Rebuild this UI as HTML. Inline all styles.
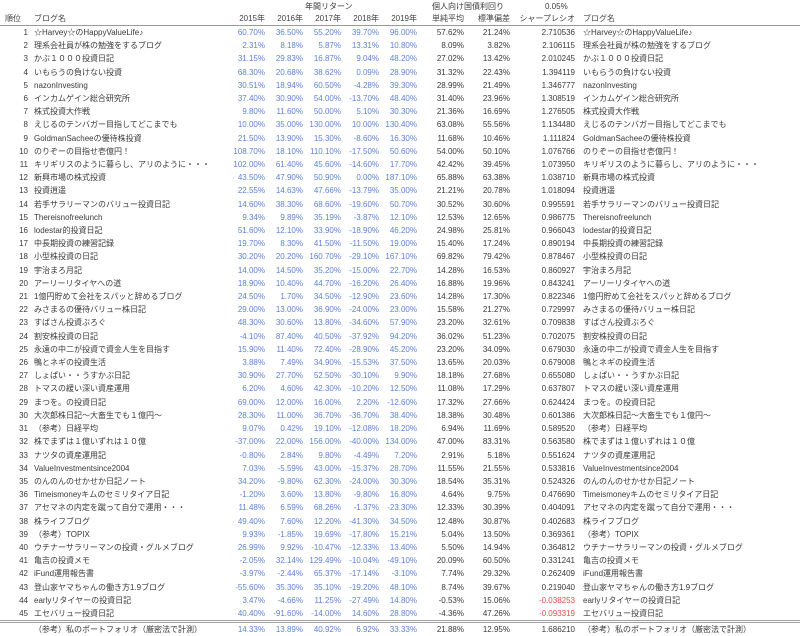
<!DOCTYPE html>
<html><head><meta charset="utf-8"><style>
html,body{margin:0;padding:0;background:#fff;width:800px;height:635px;overflow:hidden}
body{font-family:"Liberation Sans","Noto Sans CJK JP",sans-serif;font-size:8px;color:#3a3a3a}
.top{position:absolute;top:1px;height:12px;line-height:12px;white-space:nowrap}
table{position:absolute;left:0;top:13px;border-collapse:collapse;table-layout:fixed;width:800px}
td{padding:0;height:13.2px;line-height:13.2px;white-space:nowrap;overflow:visible;text-align:right}
td:nth-child(2),td:nth-child(11){text-align:left}
td:nth-child(2){padding-left:6px}
td:nth-child(11){padding-left:8px}
td:nth-child(n+3):nth-child(-n+7){color:#5f82d6}
tr.h td{height:12px;line-height:12px;border-bottom:1px solid #9a9a9a;color:#444}
tr.h td:first-child{text-align:left;padding-left:5px}
tr.h td:nth-child(n+3):nth-child(-n+7){color:#444}
tr.f td{border-top:3px double #a0a0a0}
.r{color:#f04848}
</style></head><body>
<div class="top" style="left:305px">年間リターン</div>
<div class="top" style="left:432px">個人向け国債利回り</div>
<div class="top" style="left:545px">0.05%</div>
<table>
<colgroup><col style="width:28px"><col style="width:200px"><col style="width:37px"><col style="width:38px"><col style="width:38px"><col style="width:38px"><col style="width:38px"><col style="width:47px"><col style="width:46px"><col style="width:65px"><col style="width:225px"></colgroup>
<tr class="h"><td>順位<td>ブログ名<td>2015年<td>2016年<td>2017年<td>2018年<td>2019年<td>単純平均<td>標準偏差<td>シャープレシオ<td>ブログ名
<tr><td>1<td>☆Harvey☆のHappyValueLife♪<td>60.70%<td>36.50%<td>55.20%<td>39.70%<td>96.00%<td>57.62%<td>21.24%<td>2.710536<td>☆Harvey☆のHappyValueLife♪
<tr><td>2<td>理系会社員が株の勉強をするブログ<td>2.31%<td>8.18%<td>5.87%<td>13.31%<td>10.80%<td>8.09%<td>3.82%<td>2.106115<td>理系会社員が株の勉強をするブログ
<tr><td>3<td>かぶ１０００投資日記<td>31.15%<td>29.83%<td>16.87%<td>9.04%<td>48.20%<td>27.02%<td>13.42%<td>2.010245<td>かぶ１０００投資日記
<tr><td>4<td>いもらうの負けない投資<td>68.30%<td>20.68%<td>38.62%<td>0.09%<td>28.90%<td>31.32%<td>22.43%<td>1.394119<td>いもらうの負けない投資
<tr><td>5<td>nazonInvesting<td>30.51%<td>18.94%<td>60.50%<td>-4.28%<td>39.30%<td>28.99%<td>21.49%<td>1.346777<td>nazonInvesting
<tr><td>6<td>インカムゲイン総合研究所<td>37.40%<td>30.90%<td>54.00%<td>-13.70%<td>48.40%<td>31.40%<td>23.96%<td>1.308519<td>インカムゲイン総合研究所
<tr><td>7<td>株式投資大作戦<td>9.80%<td>11.60%<td>50.00%<td>5.10%<td>30.30%<td>21.36%<td>16.69%<td>1.276505<td>株式投資大作戦
<tr><td>8<td>えじるのテンバガー目指してどこまでも<td>10.00%<td>35.00%<td>130.00%<td>10.00%<td>130.40%<td>63.08%<td>55.56%<td>1.134480<td>えじるのテンバガー目指してどこまでも
<tr><td>9<td>GoldmanSacheeの優待株投資<td>21.50%<td>13.90%<td>15.30%<td>-8.60%<td>16.30%<td>11.68%<td>10.46%<td>1.111824<td>GoldmanSacheeの優待株投資
<tr><td>10<td>のりぞーの目指せ壱億円！<td>108.70%<td>18.10%<td>110.10%<td>-17.50%<td>50.60%<td>54.00%<td>50.10%<td>1.076766<td>のりぞーの目指せ壱億円！
<tr><td>11<td>キリギリスのように暮らし、アリのように・・・<td>102.00%<td>61.40%<td>45.60%<td>-14.60%<td>17.70%<td>42.42%<td>39.45%<td>1.073950<td>キリギリスのように暮らし、アリのように・・・
<tr><td>12<td>新興市場の株式投資<td>43.50%<td>47.90%<td>50.90%<td>0.00%<td>187.10%<td>65.88%<td>63.38%<td>1.038710<td>新興市場の株式投資
<tr><td>13<td>投資逍遥<td>22.55%<td>14.63%<td>47.66%<td>-13.79%<td>35.00%<td>21.21%<td>20.78%<td>1.018094<td>投資逍遥
<tr><td>14<td>若手サラリーマンのバリュー投資日記<td>14.60%<td>38.30%<td>68.60%<td>-19.60%<td>50.70%<td>30.52%<td>30.60%<td>0.995591<td>若手サラリーマンのバリュー投資日記
<tr><td>15<td>Thereisnofreelunch<td>9.34%<td>9.89%<td>35.19%<td>-3.87%<td>12.10%<td>12.53%<td>12.65%<td>0.986775<td>Thereisnofreelunch
<tr><td>16<td>lodestar的投資日記<td>51.60%<td>12.10%<td>33.90%<td>-18.90%<td>46.20%<td>24.98%<td>25.81%<td>0.966043<td>lodestar的投資日記
<tr><td>17<td>中長期投資の練習記録<td>19.70%<td>8.30%<td>41.50%<td>-11.50%<td>19.00%<td>15.40%<td>17.24%<td>0.890194<td>中長期投資の練習記録
<tr><td>18<td>小型株投資の日記<td>30.20%<td>20.20%<td>160.70%<td>-29.10%<td>167.10%<td>69.82%<td>79.42%<td>0.878467<td>小型株投資の日記
<tr><td>19<td>宇治まろ月記<td>14.00%<td>14.50%<td>35.20%<td>-15.00%<td>22.70%<td>14.28%<td>16.53%<td>0.860927<td>宇治まろ月記
<tr><td>20<td>アーリーリタイヤへの道<td>18.90%<td>10.40%<td>44.70%<td>-16.20%<td>26.40%<td>16.88%<td>19.96%<td>0.843241<td>アーリーリタイヤへの道
<tr><td>21<td>1億円貯めて会社をスパッと辞めるブログ<td>24.50%<td>1.70%<td>34.50%<td>-12.90%<td>23.60%<td>14.28%<td>17.30%<td>0.822346<td>1億円貯めて会社をスパッと辞めるブログ
<tr><td>22<td>みさまるの優待バリュー株日記<td>29.00%<td>13.00%<td>36.90%<td>-24.00%<td>23.00%<td>15.58%<td>21.27%<td>0.729997<td>みさまるの優待バリュー株日記
<tr><td>23<td>すばさん投資ぶろぐ<td>48.30%<td>30.60%<td>13.80%<td>-34.60%<td>57.90%<td>23.20%<td>32.61%<td>0.709838<td>すばさん投資ぶろぐ
<tr><td>24<td>割安株投資の日記<td>-4.10%<td>87.40%<td>40.50%<td>-37.92%<td>94.20%<td>36.02%<td>51.23%<td>0.702075<td>割安株投資の日記
<tr><td>25<td>永遠の中二が投資で資金人生を目指す<td>15.90%<td>11.40%<td>72.40%<td>-28.90%<td>45.20%<td>23.20%<td>34.09%<td>0.679030<td>永遠の中二が投資で資金人生を目指す
<tr><td>26<td>鴨とネギの投資生活<td>3.88%<td>7.49%<td>34.90%<td>-15.53%<td>37.50%<td>13.65%<td>20.03%<td>0.679008<td>鴨とネギの投資生活
<tr><td>27<td>しょぱい・・うすかぶ日記<td>30.90%<td>27.70%<td>52.50%<td>-30.10%<td>9.90%<td>18.18%<td>27.68%<td>0.655080<td>しょぱい・・うすかぶ日記
<tr><td>28<td>トマスの緩い深い資産運用<td>6.20%<td>4.60%<td>42.30%<td>-10.20%<td>12.50%<td>11.08%<td>17.29%<td>0.637807<td>トマスの緩い深い資産運用
<tr><td>29<td>まつを。の投資日記<td>69.00%<td>12.00%<td>16.00%<td>2.20%<td>-12.60%<td>17.32%<td>27.66%<td>0.624424<td>まつを。の投資日記
<tr><td>30<td>大次郎株日記〜大畜生でも１億円〜<td>28.30%<td>11.00%<td>36.70%<td>-36.70%<td>38.40%<td>18.38%<td>30.48%<td>0.601386<td>大次郎株日記〜大畜生でも１億円〜
<tr><td>31<td>（参考）日経平均<td>9.07%<td>0.42%<td>19.10%<td>-12.08%<td>18.20%<td>6.94%<td>11.69%<td>0.589520<td>（参考）日経平均
<tr><td>32<td>株でまずは１億いずれは１０億<td>-37.00%<td>22.00%<td>156.00%<td>-40.00%<td>134.00%<td>47.00%<td>83.31%<td>0.563580<td>株でまずは１億いずれは１０億
<tr><td>33<td>ナツタの資産運用記<td>-0.80%<td>2.84%<td>9.80%<td>-4.49%<td>7.20%<td>2.91%<td>5.18%<td>0.551624<td>ナツタの資産運用記
<tr><td>34<td>ValueInvestmentsince2004<td>7.03%<td>-5.59%<td>43.00%<td>-15.37%<td>28.70%<td>11.55%<td>21.55%<td>0.533816<td>ValueInvestmentsince2004
<tr><td>35<td>のんのんのせかせか日記ノート<td>34.20%<td>-9.80%<td>62.30%<td>-24.00%<td>30.30%<td>18.54%<td>35.31%<td>0.524326<td>のんのんのせかせか日記ノート
<tr><td>36<td>Timeismoneyキムのセミリタイア日記<td>-1.20%<td>3.60%<td>13.80%<td>-9.80%<td>16.80%<td>4.64%<td>9.75%<td>0.476690<td>Timeismoneyキムのセミリタイア日記
<tr><td>37<td>アセマネの内定を蹴って自分で運用・・・<td>11.48%<td>6.59%<td>68.26%<td>-1.37%<td>-23.30%<td>12.33%<td>30.39%<td>0.404091<td>アセマネの内定を蹴って自分で運用・・・
<tr><td>38<td>株ライフブログ<td>49.40%<td>7.60%<td>12.20%<td>-41.30%<td>34.50%<td>12.48%<td>30.87%<td>0.402683<td>株ライフブログ
<tr><td>39<td>（参考）TOPIX<td>9.93%<td>-1.85%<td>19.69%<td>-17.80%<td>15.21%<td>5.04%<td>13.50%<td>0.369361<td>（参考）TOPIX
<tr><td>40<td>ウチナーサラリーマンの投資・グルメブログ<td>26.99%<td>9.92%<td>-10.47%<td>-12.33%<td>13.40%<td>5.50%<td>14.94%<td>0.364812<td>ウチナーサラリーマンの投資・グルメブログ
<tr><td>41<td>亀吉の投資メモ<td>-2.05%<td>32.14%<td>129.49%<td>-10.04%<td>-49.10%<td>20.09%<td>60.50%<td>0.331241<td>亀吉の投資メモ
<tr><td>42<td>iFund運用報告書<td>-3.97%<td>-2.44%<td>65.37%<td>-17.14%<td>-3.10%<td>7.74%<td>29.32%<td>0.262409<td>iFund運用報告書
<tr><td>43<td>登山家ヤマちゃんの働き方1.9ブログ<td>-55.60%<td>35.30%<td>35.10%<td>-19.20%<td>48.10%<td>8.74%<td>39.67%<td>0.219040<td>登山家ヤマちゃんの働き方1.9ブログ
<tr><td>44<td>earlyリタイヤーの投資日記<td>3.47%<td>-4.66%<td>11.25%<td>-27.49%<td>14.80%<td>-0.53%<td>15.06%<td class="r">-0.038253<td>earlyリタイヤーの投資日記
<tr><td>45<td>エセバリュー投資日記<td>40.40%<td>-91.60%<td>-14.00%<td>14.60%<td>28.80%<td>-4.36%<td>47.26%<td class="r">-0.093319<td>エセバリュー投資日記
<tr class="f"><td><td>（参考）私のポートフォリオ（厳密法で計測）<td>14.33%<td>13.89%<td>40.92%<td>6.92%<td>33.33%<td>21.88%<td>12.95%<td>1.686210<td>（参考）私のポートフォリオ（厳密法で計測）
</table>
</body></html>
